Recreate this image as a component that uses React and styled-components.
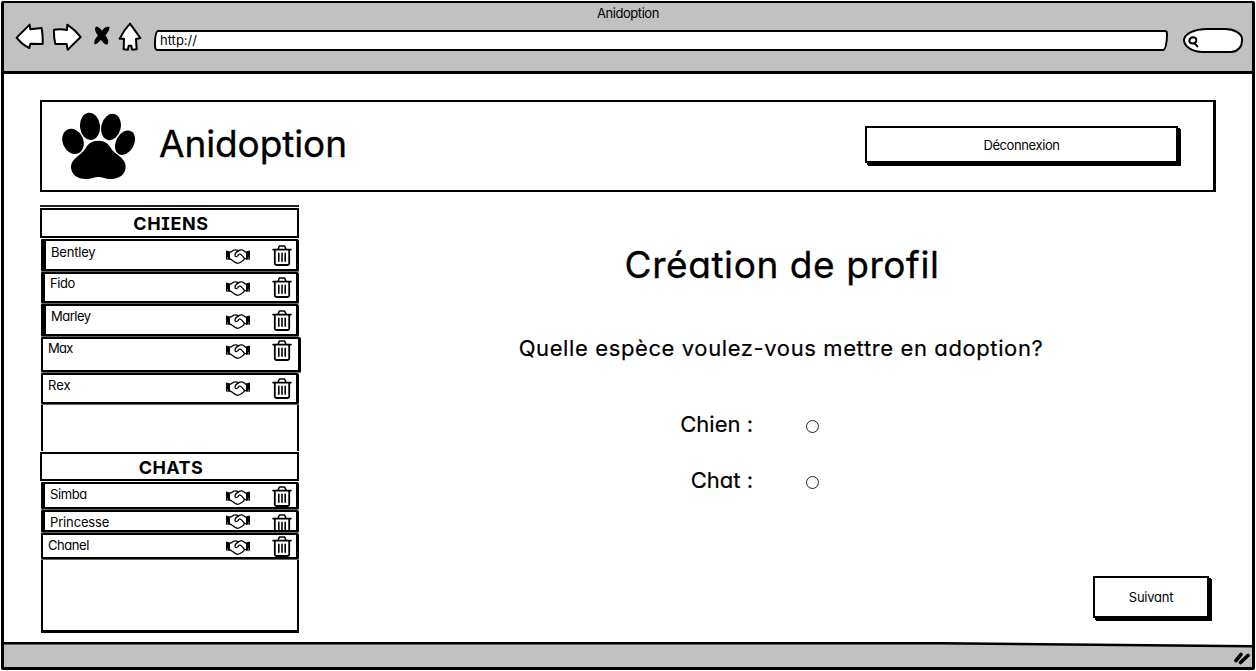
import React from "react";
import styled, { createGlobalStyle } from "styled-components";

const GlobalStyle = createGlobalStyle`
  * { box-sizing: border-box; }
  body {
    margin: 0;
    background: #fff;
    color: #000;
    font-family: Inter, "Liberation Sans", sans-serif;
    font-feature-settings: "cv11", "cv08";
    font-size: 13px;
    line-height: 16px;
  }
`;

const Browser = styled.div`
  width: 1254px;
  height: 669px;
  margin: 1px;
  display: flex;
  flex-direction: column;
  border: 2px solid #000;
  border-width: 2px 3px 3px;
  border-radius: 2px;
  background: #fff;
`;

const Chrome = styled.header`
  height: 71px;
  flex: none;
  background: #c1c1c1;
  border-bottom: 3px solid #000;
`;

const WindowTitle = styled.div`
  height: 18px;
  padding: 2px 0 0;
  text-align: center;
  letter-spacing: -0.45px;
`;

const NavBar = styled.nav`
  display: flex;
  align-items: flex-start;
  padding: 1px 9px 0 11px;
`;

const NavIcon = styled.svg`
  flex: none;
  display: block;
  width: ${(p) => p.$w}px;
  height: 29px;
  margin-right: ${(p) => p.$gap}px;
  fill: #fff;
  stroke: #000;
  stroke-width: 6;
  stroke-linejoin: round;
  stroke-linecap: round;
`;

const UrlField = styled.div`
  width: 1015px;
  height: 21px;
  margin: 8px 15px 0 0;
  padding: 0 0 0 4px;
  border: 2px solid #000;
  border-radius: 4px 3px 5px 3px / 12px 4px 16px 5px;
  background: #fff;
`;

const SearchField = styled.div`
  width: 60px;
  height: 25px;
  margin-top: 6px;
  padding: 5px 0 0 3px;
  border: 2px solid #000;
  border-radius: 24px 18px 12px 20px / 12px 11px 12px 13px;
  background: #fff;
`;

const Page = styled.div`
  flex: 1;
  display: flex;
  flex-direction: column;
  padding: 26px 37px 0 36px;
`;

const Banner = styled.div`
  height: 92px;
  width: 1176px;
  flex: none;
  display: flex;
  align-items: center;
  padding: 0 35px 0 19px;
  border: 2px solid #000;
  border-right-width: 3px;
`;

const Paw = styled.svg`
  width: 75px;
  height: 68px;
`;

const Brand = styled.h1`
  margin: 0 auto 5px 23px;
  font-size: 37px;
  line-height: 44px;
  font-weight: 400;
  letter-spacing: -0.1px;
  -webkit-text-stroke: 0.35px #000;
`;

const Button = styled.button`
  width: ${(p) => p.$w}px;
  height: ${(p) => p.$h}px;
  margin-bottom: ${(p) => p.$lift || 0}px;
  padding: 0 0 ${(p) => p.$drop}px;
  border: 2px solid #000;
  background: #fff;
  box-shadow: 2px 2px 0 #000, 3px 3px 0 #000;
  color: #000;
  font: inherit;
  font-feature-settings: inherit;
  letter-spacing: ${(p) => p.$spacing}px;
`;

const Columns = styled.div`
  display: flex;
`;

const Sidebar = styled.aside`
  width: 262px;
  flex: none;
  padding-top: 13px;
`;

const DoubleRule = styled.div`
  width: 259px;
  height: 2px;
  margin-bottom: 1px;
  background: #222;
`;

const GroupTitle = styled.h2`
  width: 259px;
  height: ${(p) => p.$h}px;
  margin: 0 0 1px;
  padding: 2px 0 0 ${(p) => p.$pad}px;
  display: flex;
  align-items: center;
  justify-content: center;
  border: 2px solid #000;
  font-size: 18px;
  font-weight: 650;
  letter-spacing: ${(p) => p.$spacing}px;
`;

const Row = styled.div`
  width: ${(p) => p.$w || 258}px;
  height: ${(p) => p.$h}px;
  margin: 0 0 1px 1px;
  display: grid;
  grid-template-columns: 1fr 24px 20px;
  column-gap: 22px;
  align-items: start;
  padding: 1px ${(p) => (p.$w || 258) - 254}px 0 0;
  border: solid #000;
  border-width: 2px 3px 2px ${(p) => p.$edge}px;
  border-radius: 1px 2px 1px 1px;
  box-shadow: 0 1px 0 #666;
  overflow: hidden;
`;

const PetName = styled.span`
  margin-top: ${(p) => p.$top}px;
  padding-left: ${(p) => p.$pad}px;
  letter-spacing: ${(p) => p.$spacing}px;
`;

const RowIcon = styled.svg`
  display: block;
  width: ${(p) => p.$w}px;
  height: ${(p) => p.$h}px;
  margin-top: ${(p) => p.$top}px;
  fill: none;
  stroke: #000;
  stroke-width: 1.3;
  stroke-linejoin: round;
  stroke-linecap: round;
`;

const EmptySlot = styled.div`
  width: 258px;
  height: ${(p) => p.$h}px;
  margin: 1px 0 1px 1px;
  border: solid #000;
  border-width: 0 2px ${(p) => (p.$closed ? 3 : 0)}px 2px;
`;

const Main = styled.main`
  flex: 1;
  display: flex;
  flex-direction: column;
  align-items: center;
  padding: 51px 0 0 0;
`;

const Title = styled.h2`
  margin: 0 0 0 47px;
  font-size: 37px;
  line-height: 44px;
  font-weight: 400;
  letter-spacing: 0.58px;
  -webkit-text-stroke: 0.35px #000;
`;

const Question = styled.p`
  margin: 47px 0 0 45px;
  font-size: 22px;
  line-height: 28px;
  font-weight: 400;
  letter-spacing: 0.61px;
  -webkit-text-stroke: 0.2px #000;
`;

const Choices = styled.div`
  align-self: flex-start;
  display: grid;
  grid-template-columns: 90px 13px;
  column-gap: 53px;
  row-gap: 28px;
  margin: 48px 0 0 361px;
`;

const ChoiceLabel = styled.label`
  font-size: 22px;
  line-height: 28px;
  font-weight: 400;
  text-align: right;
  white-space: nowrap;
  -webkit-text-stroke: 0.2px #000;
`;

const Radio = styled.input`
  appearance: none;
  width: 13px;
  height: 13px;
  margin: 10px 0 0;
  border: 1px solid #222;
  border-radius: 50%;
  background: #fff;
`;

const Actions = styled.div`
  align-self: flex-end;
  margin: 82px 6px 0 0;
`;

const StatusBar = styled.footer`
  height: 25px;
  flex: none;
  margin-top: -2px;
  background: #000;
  clip-path: polygon(0 0, 75% 0, 100% 3px, 100% 100%, 0 100%);
`;

const StatusFill = styled.div`
  height: 100%;
  display: flex;
  justify-content: flex-end;
  align-items: flex-end;
  padding: 0 1px 2px 0;
  background: #c1c1c1;
  clip-path: polygon(0 2.5px, 75% 2.5px, 100% 5.5px, 100% 100%, 0 100%);
`;

const Grip = styled.svg`
  width: 18px;
  height: 14px;
  stroke: #000;
  stroke-width: 3.6;
  stroke-linecap: round;
`;

const Handshake = ({ top }) => (
  <RowIcon $w={24} $h={15} $top={top} viewBox="0 0 24 15">
    <path d="M3.8 3.3C6 3 7 1 9 .9 10.6.7 11.5 1.2 12.4 1.9 13.4 1 14.6.7 16 .9 17.8 1.2 18.4 3 20.2 3.3M3.8 9.9C6 10.3 7.6 13.6 11.4 14.3 14.5 14 17.6 11.4 18.5 9.7L20.2 9.6" />
    <path d="M12.4 1.9C10.4 3 8.8 4.8 9 6.4 9.3 8.3 11.8 7.8 12.9 5.2 14.6 4.6 15.5 5.6 16.2 6.7L18.5 9.5" strokeWidth="1.2" />
    <path d="M0 1.5 4 2.6V10.8L0 10.6ZM24 1.5 20 2.6V10.8L24 10.6Z" fill="#000" stroke="none" />
    <path d="M1.5 9H1.7M22.3 9H22.5" stroke="#fff" strokeWidth="0.8" />
  </RowIcon>
);

const Trash = ({ top }) => (
  <RowIcon $w={20} $h={21} $top={top} viewBox="0 0 20 21">
    <path d="M1 4.6H19M6 4.2 7.4 1H12.6L14 4.2" strokeWidth="1.6" />
    <path d="M2.8 5V18.5Q2.8 20 4.4 20H15.6Q17.2 20 17.2 18.5V5" strokeWidth="1.8" />
    <path d="M6.8 8.2V16.3M10 8.2V16.3M13.2 8.2V16.3" strokeWidth="1.6" />
  </RowIcon>
);

const dogs = [
  { name: "Bentley", h: 32, edge: 5, pad: 5, spacing: -0.2, y: 2, hand: 7, bin: 3 },
  { name: "Fido", h: 31, edge: 4, pad: 5, spacing: -0.4, y: 0, hand: 6, bin: 2 },
  { name: "Marley", h: 32, edge: 5, pad: 5, spacing: -0.5, y: 1, hand: 7, bin: 3 },
  { name: "Max", h: 35, w: 260, edge: 2, pad: 5, spacing: -0.7, y: 0, hand: 4, bin: 0 },
  { name: "Rex", h: 31, edge: 2, pad: 5, spacing: 0, y: 1, hand: 5, bin: 2 },
];

const cats = [
  { name: "Simba", h: 27, edge: 4, pad: 5, spacing: -0.4, y: 1, hand: 5, bin: 1 },
  { name: "Princesse", h: 22, edge: 4, pad: 5, spacing: -0.15, y: 1, hand: 1, bin: 1 },
  { name: "Chanel", h: 26, edge: 2, pad: 5, spacing: -0.45, y: 1, hand: 4, bin: 0 },
];

const PetRow = ({ pet }) => (
  <Row $h={pet.h} $w={pet.w} $edge={pet.edge}>
    <PetName $top={pet.y} $pad={pet.pad} $spacing={pet.spacing}>{pet.name}</PetName>
    <Handshake top={pet.hand} />
    <Trash top={pet.bin} />
  </Row>
);

export default function App() {
  return (
    <>
      <GlobalStyle />
      <Browser>
        <Chrome>
          <WindowTitle>Anidoption</WindowTitle>
          <NavBar>
            <NavIcon $w={29} $gap={8} viewBox="45 66 87 87">
              <path d="M50 113 89 74 91 88 125 84Q129 108 128 132L91 131 88 144Q66 134 50 113Z" />
            </NavIcon>
            <NavIcon $w={30} $gap={11} viewBox="156 66 90 87">
              <path d="M162 89Q182 86 201 90L202 74Q226 90 242 111L203 149 200 132 166 132Q161 112 162 89Z" />
            </NavIcon>
            <NavIcon $w={18} $gap={7} viewBox="279 66 54 87">
              <path d="M289 82Q299 84 306 98 314 82 326 83 328 88 313 107 325 120 321 131 313 132 303 115 290 132 285 130 284 122 297 107 284 90 289 82Z" fill="#000" strokeWidth="5" />
            </NavIcon>
            <NavIcon $w={24} $gap={12} viewBox="354 66 72 87">
              <path d="M390 71 421 114 408 117 410 148 396 149 394 137 386 137 384 149 371 148 372 116 359 116Q372 90 390 71Z" />
            </NavIcon>
            <UrlField>http://</UrlField>
            <SearchField>
              <svg width="11" height="12" viewBox="0 0 11 12" fill="none" stroke="#000" strokeWidth="2" strokeLinecap="round">
                <path d="M1.3 4.8Q1.8 1.4 5 1.2 8.4 1.2 8.3 4.4 8 7.6 4.8 7.6 1.6 7.4 1.3 4.8ZM6.5 7.4 9.3 10.4" />
              </svg>
            </SearchField>
          </NavBar>
        </Chrome>
        <Page>
          <Banner>
            <Paw viewBox="93 66 225 204">
              <ellipse cx="180" cy="109" rx="30" ry="41" transform="rotate(-6 180 109)" />
              <ellipse cx="243" cy="111" rx="29" ry="40" transform="rotate(14 243 111)" />
              <ellipse cx="129" cy="154" rx="31" ry="39" transform="rotate(-24 129 154)" />
              <ellipse cx="285" cy="158" rx="27" ry="39" transform="rotate(28 285 158)" />
              <path d="M205 152C225 152 236 162 243 175 253 194 287 202 287 230 287 254 266 267 240 267 226 267 218 261 205 261 193 261 184 267 168 267 141 267 123 252 123 230 123 206 153 196 166 176 174 161 185 152 205 152Z" />
            </Paw>
            <Brand>Anidoption</Brand>
            <Button $w={313} $h={37} $lift={3} $drop={0} $spacing={-0.4}>Déconnexion</Button>
          </Banner>
          <Columns>
            <Sidebar>
              <DoubleRule />
              <GroupTitle $h={30} $pad={3} $spacing={0.6}>CHIENS</GroupTitle>
              {dogs.map((pet) => <PetRow key={pet.name} pet={pet} />)}
              <EmptySlot $h={46} />
              <GroupTitle $h={29} $pad={3} $spacing={0.4}>CHATS</GroupTitle>
              {cats.map((pet) => <PetRow key={pet.name} pet={pet} />)}
              <EmptySlot $h={73} $closed />
            </Sidebar>
            <Main>
              <Title>Création de profil</Title>
              <Question>Quelle espèce voulez-vous mettre en adoption?</Question>
              <Choices>
                <ChoiceLabel htmlFor="chien">Chien :</ChoiceLabel>
                <Radio id="chien" type="radio" name="espece" />
                <ChoiceLabel htmlFor="chat">Chat :</ChoiceLabel>
                <Radio id="chat" type="radio" name="espece" />
              </Choices>
              <Actions>
                <Button $w={116} $h={42} $drop={1} $spacing={-0.25}>Suivant</Button>
              </Actions>
            </Main>
          </Columns>
        </Page>
        <StatusBar>
          <StatusFill>
            <Grip viewBox="0 0 18 14"><path d="M3 9.5 8 3.5M7.5 11.5 15 4.5" /></Grip>
          </StatusFill>
        </StatusBar>
      </Browser>
    </>
  );
}
